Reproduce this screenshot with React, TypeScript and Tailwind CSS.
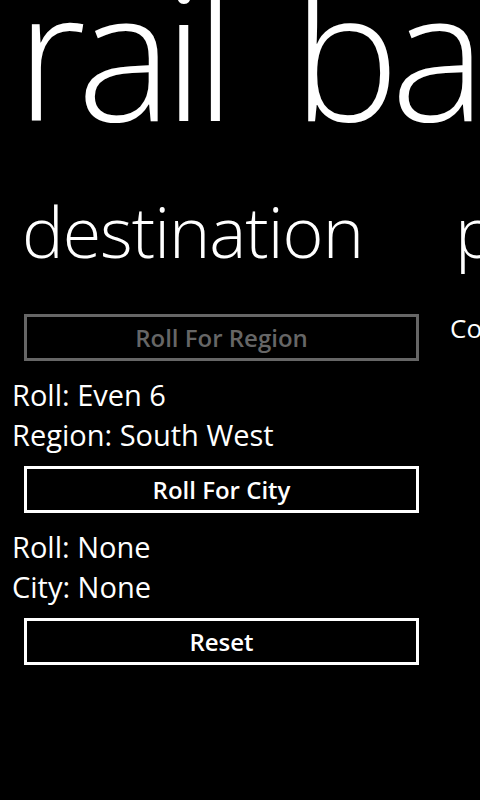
const results = [
  { label: "Roll", value: "Even 6" },
  { label: "Region", value: "South West" },
];

const cityResults = [
  { label: "Roll", value: "None" },
  { label: "City", value: "None" },
];

function WpButton({ text, disabled }: { text: string; disabled?: boolean }) {
  return (
    <button
      className={
        disabled
          ? "ml-[12px] flex h-[47px] w-[395px] items-center justify-center border-[3px] border-[#666666] text-[24px] font-semibold text-[#666666]"
          : "ml-[12px] flex h-[47px] w-[395px] items-center justify-center border-[3px] border-white text-[24px] font-semibold text-white"
      }
    >
      {text}
    </button>
  );
}

function Lines({ items }: { items: { label: string; value: string }[] }) {
  return (
    <div className="flex flex-col pt-[14px] pb-[11px]">
      {items.map((it) => (
        <div key={it.label} className="h-[40px] text-[29px] leading-[40px] whitespace-nowrap">
          {it.label}: {it.value}
        </div>
      ))}
    </div>
  );
}

export default function App() {
  return (
    <div className="h-[800px] w-[480px] overflow-hidden bg-black text-white font-['Open_Sans',sans-serif]">
      <div className="-mt-[38px] h-[180px] whitespace-nowrap pl-[16px] text-[180px] font-light leading-none tracking-[-9px] [word-spacing:28px]">
        rail baron
      </div>

      <div className="mt-[54px] flex">
        <section className="w-[450px] shrink-0 pl-[12px]">
          <h2 className="h-[70px] pl-[10px] text-[70px] font-light leading-none tracking-[-1px] whitespace-nowrap">
            destination
          </h2>
          <div className="mt-[48px] flex flex-col">
            <WpButton text="Roll For Region" disabled />
            <Lines items={results} />
            <WpButton text="Roll For City" />
            <Lines items={cityResults} />
            <WpButton text="Reset" />
          </div>
        </section>

        <section className="w-[432px] shrink-0">
          <h2 className="h-[70px] pl-[5px] text-[70px] font-light leading-none whitespace-nowrap">payout</h2>
          <div className="mt-[49px] text-[26px] leading-none whitespace-nowrap">Cost: None</div>
        </section>
      </div>
    </div>
  );
}
